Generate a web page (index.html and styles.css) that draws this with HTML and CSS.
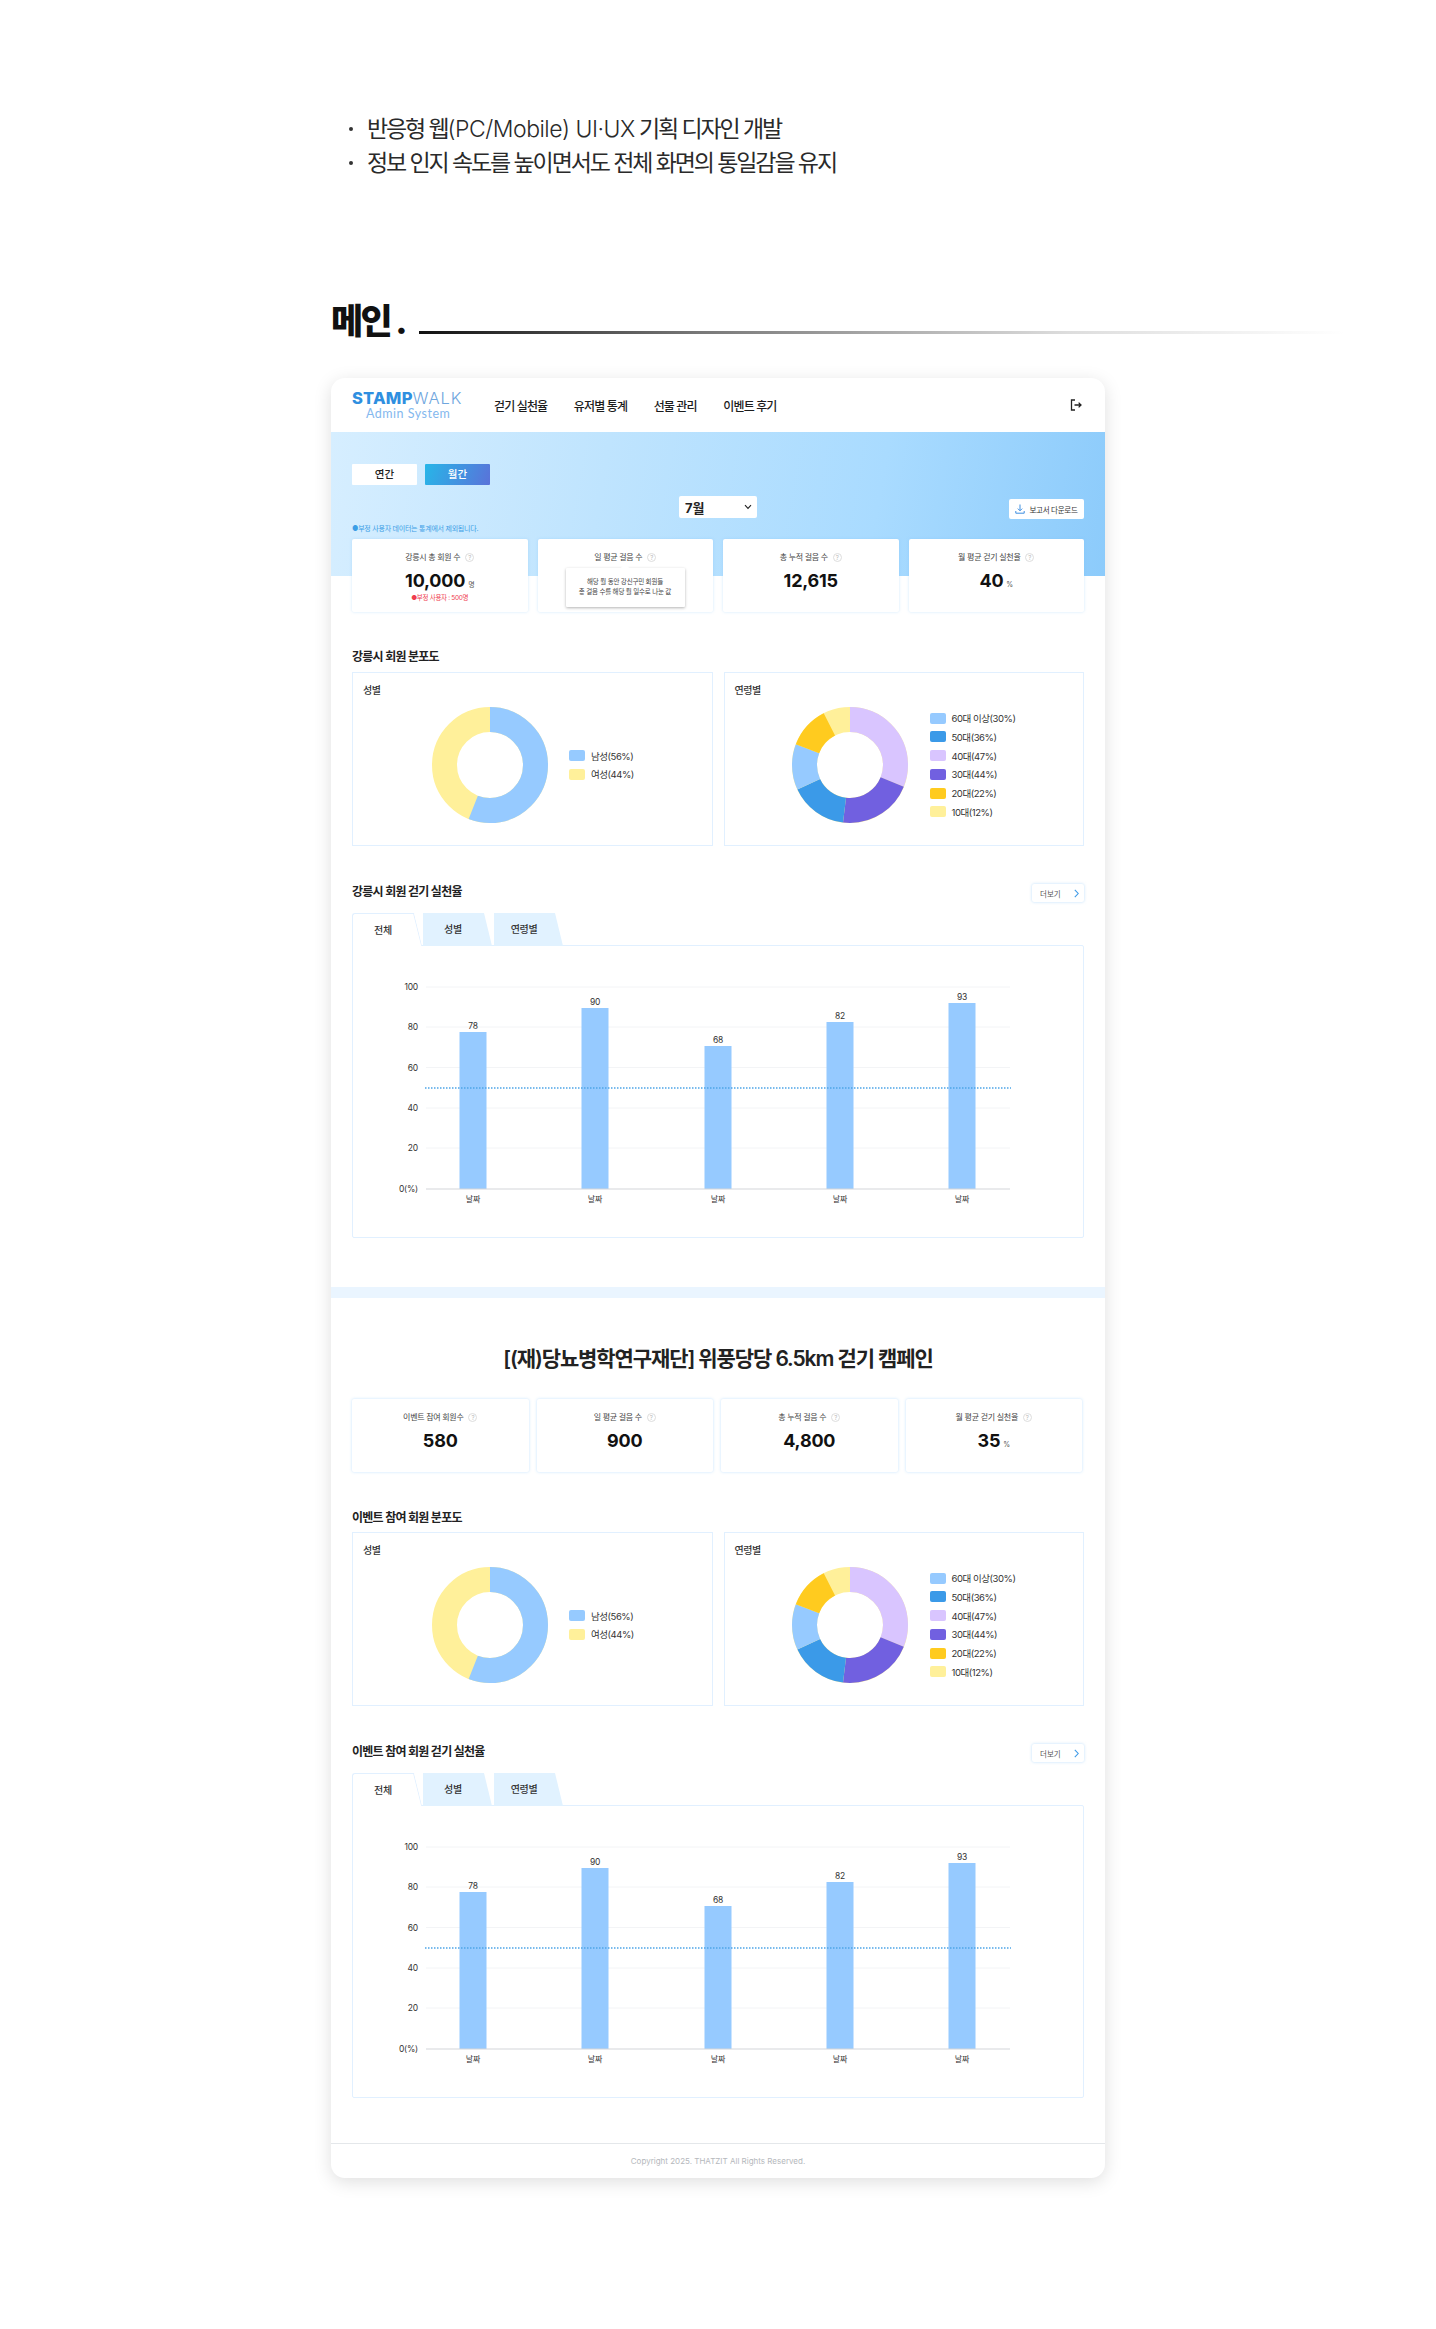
FILE: index.html
```html
<!DOCTYPE html>
<html lang="ko">
<head>
<meta charset="utf-8">
<title>STAMPWALK Admin System</title>
<link rel="stylesheet" href="styles.css">
</head>
<body>
<main class="page">
  <ul class="intro">
    <li><span>반응형 웹<em>(PC/Mobile) UI·UX</em> 기획 디자인 개발</span></li>
    <li><span>정보 인지 속도를 높이면서도 전체 화면의 통일감을 유지</span></li>
  </ul>
  <div class="title-row">
    <h1 class="page-title">메인 .</h1>
    <div class="title-line"></div>
  </div>

  <section class="card">
    <header class="topbar">
      <div class="logo">
        <div class="logo-main"><b>STAMP</b>WALK</div>
        <div class="logo-sub">Admin System</div>
      </div>
      <nav class="nav">
        <span>걷기 실천율</span><span>유저별 통계</span><span>선물 관리</span><span>이벤트 후기</span>
      </nav>
      <svg class="logout" width="12" height="12" viewBox="0 0 12 12"><path d="M5 1H1.5v10H5M4.5 6h6.5M8.6 3.6 11 6 8.6 8.4" fill="none" stroke="#222" stroke-width="1.3"/></svg>
    </header>

    <div class="hero">
      <div class="period">
        <span class="period-btn">연간</span>
        <span class="period-btn is-on">월간</span>
      </div>
      <div class="tools">
        <div class="month">7월<svg width="8" height="6" viewBox="0 0 8 6"><path d="M1 1.2 4 4.4l3-3.2" fill="none" stroke="#222" stroke-width="1.1"/></svg></div>
        <div class="report"><svg width="10" height="10" viewBox="0 0 10 10"><path d="M5 .5v6M2.8 4.6 5 6.8l2.2-2.2M.8 7v2.2h8.4V7" fill="none" stroke="#3f8fe0" stroke-width="1"/></svg>보고서 다운로드</div>
      </div>
      <p class="note">●부정 사용자 데이터는 통계에서 제외됩니다.</p>
      <div class="stats">
        <div class="stat">
          <div class="stat-label">강릉시 총 회원 수 <i class="info">?</i></div>
          <div class="stat-value">10,000<small>명</small></div>
          <div class="stat-sub">●부정 사용자 : 500명</div>
        </div>
        <div class="stat">
          <div class="stat-label">일 평균 걸음 수 <i class="info">?</i></div>
          <div class="tooltip">해당 월 동안 강신구민 회원들<br>총 걸음 수를 해당 월 일수로 나눈 값</div>
        </div>
        <div class="stat">
          <div class="stat-label">총 누적 걸음 수 <i class="info">?</i></div>
          <div class="stat-value">12,615</div>
        </div>
        <div class="stat">
          <div class="stat-label">월 평균 걷기 실천율 <i class="info">?</i></div>
          <div class="stat-value">40<small>%</small></div>
        </div>
      </div>
    </div>

    <div class="body">
      <h2 class="heading heading-hero">강릉시 회원 분포도</h2>
      <div class="dist">
        <div class="panel">
          <h3 class="panel-title">성별</h3>
          <div class="donut-row donut-row-gender">
            <svg class="donut" width="116" height="116" viewBox="0 0 116 116">
              <circle class="ring" cx="58" cy="58" r="45.5" pathLength="100" stroke="#fff09a"/>
              <circle class="ring" cx="58" cy="58" r="45.5" pathLength="100" stroke="#96caff" stroke-dasharray="56 44" transform="rotate(-90 58 58)"/>
            </svg>
            <ul class="legend">
              <li><i class="sw c1"></i>남성(56%)</li>
              <li><i class="sw c6"></i>여성(44%)</li>
            </ul>
          </div>
        </div>
        <div class="panel">
          <h3 class="panel-title">연령별</h3>
          <div class="donut-row donut-row-age">
            <svg class="donut" width="116" height="116" viewBox="0 0 116 116">
              <g transform="rotate(-90 58 58)">
                <circle class="ring" cx="58" cy="58" r="45.5" pathLength="360" stroke="#fff09a"/>
                <circle class="ring" cx="58" cy="58" r="45.5" pathLength="360" stroke="#d9c5ff" stroke-dasharray="112 248"/>
                <circle class="ring" cx="58" cy="58" r="45.5" pathLength="360" stroke="#7160e0" stroke-dasharray="75 285" stroke-dashoffset="-112"/>
                <circle class="ring" cx="58" cy="58" r="45.5" pathLength="360" stroke="#3b9ae8" stroke-dasharray="58 302" stroke-dashoffset="-187"/>
                <circle class="ring" cx="58" cy="58" r="45.5" pathLength="360" stroke="#96caff" stroke-dasharray="46 314" stroke-dashoffset="-245"/>
                <circle class="ring" cx="58" cy="58" r="45.5" pathLength="360" stroke="#ffcb1f" stroke-dasharray="42 318" stroke-dashoffset="-291"/>
              </g>
            </svg>
            <ul class="legend">
              <li><i class="sw c1"></i>60대 이상(30%)</li>
              <li><i class="sw c2"></i>50대(36%)</li>
              <li><i class="sw c3"></i>40대(47%)</li>
              <li><i class="sw c4"></i>30대(44%)</li>
              <li><i class="sw c5"></i>20대(22%)</li>
              <li><i class="sw c6"></i>10대(12%)</li>
            </ul>
          </div>
        </div>
      </div>

      <div class="heading-row">
        <h2 class="heading">강릉시 회원 걷기 실천율</h2>
        <div class="more">더보기<svg width="5" height="9" viewBox="0 0 5 9"><path d="M.8.8 4.2 4.5.8 8.2" fill="none" stroke="#3f9be8" stroke-width="1.1"/></svg></div>
      </div>
      <div class="tabs">
        <span class="tab is-on">전체</span><span class="tab">성별</span><span class="tab">연령별</span>
      </div>
      <div class="chart-panel">
        <svg class="chart" width="730" height="291" viewBox="0 0 730 291">
          <g class="grid"><line x1="73" x2="657" y1="41" y2="41"/><line x1="73" x2="657" y1="81" y2="81"/><line x1="73" x2="657" y1="121.5" y2="121.5"/><line x1="73" x2="657" y1="162" y2="162"/><line x1="73" x2="657" y1="202" y2="202"/></g>
          <g class="bars"><rect x="106.5" y="86" width="27" height="157"/><rect x="228.5" y="62" width="27" height="181"/><rect x="351.5" y="100" width="27" height="143"/><rect x="473.5" y="76" width="27" height="167"/><rect x="595.5" y="57" width="27" height="186"/></g>
          <line class="axis" x1="73" x2="657" y1="243" y2="243"/>
          <line class="goal" x1="72" x2="658" y1="142" y2="142"/>
          <g class="ticks"><text x="65" y="44">100</text><text x="65" y="84">80</text><text x="65" y="124.500">60</text><text x="65" y="165">40</text><text x="65" y="205">20</text><text x="65" y="246">0(%)</text></g>
          <g class="vals"><text x="120" y="83">78</text><text x="242" y="59">90</text><text x="365" y="97">68</text><text x="487" y="73">82</text><text x="609" y="54">93</text></g>
          <g class="dates"><text x="120" y="256">날짜</text><text x="242" y="256">날짜</text><text x="365" y="256">날짜</text><text x="487" y="256">날짜</text><text x="609" y="256">날짜</text></g>
        </svg>
      </div>
    </div>

    <div class="band"></div>

    <div class="body body-event">
      <h2 class="event-title">[(재)당뇨병학연구재단] 위풍당당 6.5km 걷기 캠페인</h2>
      <div class="stats stats-event">
        <div class="stat">
          <div class="stat-label">이벤트 참여 회원수 <i class="info">?</i></div>
          <div class="stat-value">580</div>
        </div>
        <div class="stat">
          <div class="stat-label">일 평균 걸음 수 <i class="info">?</i></div>
          <div class="stat-value">900</div>
        </div>
        <div class="stat">
          <div class="stat-label">총 누적 걸음 수 <i class="info">?</i></div>
          <div class="stat-value">4,800</div>
        </div>
        <div class="stat">
          <div class="stat-label">월 평균 걷기 실천율 <i class="info">?</i></div>
          <div class="stat-value">35<small>%</small></div>
        </div>
      </div>

      <h2 class="heading heading-event">이벤트 참여 회원 분포도</h2>
      <div class="dist">
        <div class="panel">
          <h3 class="panel-title">성별</h3>
          <div class="donut-row donut-row-gender">
            <svg class="donut" width="116" height="116" viewBox="0 0 116 116">
              <circle class="ring" cx="58" cy="58" r="45.5" pathLength="100" stroke="#fff09a"/>
              <circle class="ring" cx="58" cy="58" r="45.5" pathLength="100" stroke="#96caff" stroke-dasharray="56 44" transform="rotate(-90 58 58)"/>
            </svg>
            <ul class="legend">
              <li><i class="sw c1"></i>남성(56%)</li>
              <li><i class="sw c6"></i>여성(44%)</li>
            </ul>
          </div>
        </div>
        <div class="panel">
          <h3 class="panel-title">연령별</h3>
          <div class="donut-row donut-row-age">
            <svg class="donut" width="116" height="116" viewBox="0 0 116 116">
              <g transform="rotate(-90 58 58)">
                <circle class="ring" cx="58" cy="58" r="45.5" pathLength="360" stroke="#fff09a"/>
                <circle class="ring" cx="58" cy="58" r="45.5" pathLength="360" stroke="#d9c5ff" stroke-dasharray="112 248"/>
                <circle class="ring" cx="58" cy="58" r="45.5" pathLength="360" stroke="#7160e0" stroke-dasharray="75 285" stroke-dashoffset="-112"/>
                <circle class="ring" cx="58" cy="58" r="45.5" pathLength="360" stroke="#3b9ae8" stroke-dasharray="58 302" stroke-dashoffset="-187"/>
                <circle class="ring" cx="58" cy="58" r="45.5" pathLength="360" stroke="#96caff" stroke-dasharray="46 314" stroke-dashoffset="-245"/>
                <circle class="ring" cx="58" cy="58" r="45.5" pathLength="360" stroke="#ffcb1f" stroke-dasharray="42 318" stroke-dashoffset="-291"/>
              </g>
            </svg>
            <ul class="legend">
              <li><i class="sw c1"></i>60대 이상(30%)</li>
              <li><i class="sw c2"></i>50대(36%)</li>
              <li><i class="sw c3"></i>40대(47%)</li>
              <li><i class="sw c4"></i>30대(44%)</li>
              <li><i class="sw c5"></i>20대(22%)</li>
              <li><i class="sw c6"></i>10대(12%)</li>
            </ul>
          </div>
        </div>
      </div>

      <div class="heading-row">
        <h2 class="heading">이벤트 참여 회원 걷기 실천율</h2>
        <div class="more">더보기<svg width="5" height="9" viewBox="0 0 5 9"><path d="M.8.8 4.2 4.5.8 8.2" fill="none" stroke="#3f9be8" stroke-width="1.1"/></svg></div>
      </div>
      <div class="tabs">
        <span class="tab is-on">전체</span><span class="tab">성별</span><span class="tab">연령별</span>
      </div>
      <div class="chart-panel">
        <svg class="chart" width="730" height="291" viewBox="0 0 730 291">
          <g class="grid"><line x1="73" x2="657" y1="41" y2="41"/><line x1="73" x2="657" y1="81" y2="81"/><line x1="73" x2="657" y1="121.5" y2="121.5"/><line x1="73" x2="657" y1="162" y2="162"/><line x1="73" x2="657" y1="202" y2="202"/></g>
          <g class="bars"><rect x="106.5" y="86" width="27" height="157"/><rect x="228.5" y="62" width="27" height="181"/><rect x="351.5" y="100" width="27" height="143"/><rect x="473.5" y="76" width="27" height="167"/><rect x="595.5" y="57" width="27" height="186"/></g>
          <line class="axis" x1="73" x2="657" y1="243" y2="243"/>
          <line class="goal" x1="72" x2="658" y1="142" y2="142"/>
          <g class="ticks"><text x="65" y="44">100</text><text x="65" y="84">80</text><text x="65" y="124.500">60</text><text x="65" y="165">40</text><text x="65" y="205">20</text><text x="65" y="246">0(%)</text></g>
          <g class="vals"><text x="120" y="83">78</text><text x="242" y="59">90</text><text x="365" y="97">68</text><text x="487" y="73">82</text><text x="609" y="54">93</text></g>
          <g class="dates"><text x="120" y="256">날짜</text><text x="242" y="256">날짜</text><text x="365" y="256">날짜</text><text x="487" y="256">날짜</text><text x="609" y="256">날짜</text></g>
        </svg>
      </div>
    </div>

    <footer class="footer">Copyright 2025. THATZIT All Rights Reserved.</footer>
  </section>
</main>
</body>
</html>
```
FILE: styles.css
```css
* { box-sizing: border-box; }
html, body { margin: 0; padding: 0; background: #fff; }
body {
  font-family: Inter, "Noto Sans CJK KR", sans-serif;
  color: #222;
}
ul { list-style: none; margin: 0; padding: 0; }
h1, h2, h3, p { margin: 0; }

.page { height: 2329px; padding-top: 112px; }

.intro { margin-left: 349px; }
.intro li {
  font-size: 23px;
  line-height: 34px;
  letter-spacing: -2.1px;
  color: #2a2a2a;
  display: flex;
  align-items: center;
  gap: 14px;
}
.intro li::before {
  content: "";
  width: 4px;
  height: 4px;
  border-radius: 50%;
  background: #333;
  flex: none;
}
.intro em { font-style: normal; font-weight: 300; letter-spacing: -.5px; }

.title-row {
  display: flex;
  align-items: flex-end;
  margin: 116px 0 0 331px;
  height: 44px;
}
.page-title {
  font-size: 35px;
  line-height: 44px;
  font-weight: 800;
  letter-spacing: -2.6px;
  margin-bottom: -3px;
  color: #111;
}
.title-line {
  width: 926px;
  height: 3px;
  margin: 0 0 6px 14px;
  background: linear-gradient(90deg, #111 0%, #777 30%, #ddd 70%, #fff 100%);
}

.card {
  width: 774px;
  height: 1800px;
  margin: 38px 0 0 331px;
  background: #fff;
  border-radius: 14px;
  box-shadow: 0 4px 18px rgba(0, 0, 0, .13);
  overflow: hidden;
}

.topbar {
  height: 54px;
  display: flex;
  align-items: center;
  padding: 0 21px;
}
.logo { width: 142px; color: #4b9fe8; }
.logo-main {
  font-size: 16.5px;
  line-height: 17px;
  font-weight: 300;
  letter-spacing: .9px;
  color: #6fa6de;
}
.logo-main b { font-weight: 800; letter-spacing: .2px; color: #2f8fe0; }
.logo-sub {
  font-family: Lato, sans-serif;
  font-size: 12.5px;
  line-height: 13px;
  margin-left: 14px;
  color: #84b8ee;
  letter-spacing: .5px;
}
.nav {
  display: flex;
  gap: 26.5px;
  font-size: 12px;
  font-weight: 500;
  letter-spacing: -.85px;
  color: #1d1d1d;
}
.logout { margin-left: auto; margin-right: 2px; }

.hero {
  height: 144px;
  padding: 32px 21px 0;
  background: linear-gradient(100deg, #d6eeff 0%, #bfe4fe 35%, #a9dbff 70%, #8ccbfb 100%);
}
.period { display: flex; gap: 8px; }
.period-btn {
  width: 65px;
  height: 21px;
  background: #fff;
  font-size: 10.5px;
  font-weight: 500;
  line-height: 21px;
  text-align: center;
  border-radius: 1px;
}
.period-btn.is-on {
  color: #fff;
  background: linear-gradient(110deg, #27b6e8, #5a72d9);
}
.tools {
  display: grid;
  grid-template-columns: 1fr 78px 1fr;
  align-items: start;
  margin-top: 11px;
  height: 23px;
}
.month {
  grid-column: 2;
  height: 22px;
  background: #fff;
  border-radius: 2px;
  display: flex;
  align-items: center;
  justify-content: space-between;
  padding: 0 5px 0 6px;
  font-size: 13px;
  font-weight: 700;
}
.report {
  grid-column: 3;
  justify-self: end;
  width: 75px;
  height: 20px;
  margin-top: 3px;
  background: #fff;
  border-radius: 2px;
  display: flex;
  align-items: center;
  justify-content: center;
  gap: 4px;
  font-size: 7.5px;
  letter-spacing: -.3px;
  color: #333;
}
.note {
  font-size: 7px;
  line-height: 10px;
  letter-spacing: -.25px;
  color: #3c9ee6;
  margin-top: 5px;
}
.stats {
  display: grid;
  grid-template-columns: repeat(4, 1fr);
  gap: 10px;
  margin-top: 5px;
}
.stat {
  position: relative;
  height: 73px;
  background: #fff;
  border-radius: 2px;
  box-shadow: 0 0 3px rgba(120, 190, 250, .35);
  text-align: center;
  padding-top: 13px;
}
.stat-label {
  font-size: 8px;
  line-height: 10px;
  letter-spacing: -.3px;
  color: #444;
  display: flex;
  justify-content: center;
  align-items: center;
  gap: 3px;
  white-space: pre;
}
.info {
  width: 9px;
  height: 9px;
  border: 1px solid #ddd;
  border-radius: 50%;
  font-size: 6px;
  line-height: 7px;
  font-style: normal;
  color: #bbb;
  text-align: center;
  letter-spacing: 0;
}
.stat-value {
  font-size: 18px;
  font-weight: 700;
  line-height: 22px;
  margin-top: 8px;
  letter-spacing: -.2px;
  color: #111;
}
.stat-value small {
  font-size: 7px;
  font-weight: 400;
  margin-left: 3px;
  color: #555;
}
.stat-sub {
  font-size: 6.5px;
  line-height: 8px;
  letter-spacing: -.3px;
  color: #ef3d4e;
  margin-top: -2px;
}
.tooltip {
  position: absolute;
  left: 28px;
  top: 29px;
  width: 119px;
  height: 39px;
  padding-top: 9px;
  background: #fff;
  font-size: 6.5px;
  line-height: 10px;
  letter-spacing: -.2px;
  color: #444;
  box-shadow: 0 1px 3px rgba(0, 0, 0, .3);
  border-radius: 1px;
}
.tooltip::before {
  content: "";
  position: absolute;
  left: 56px;
  top: -3px;
  width: 6px;
  height: 6px;
  background: #fff;
  transform: rotate(45deg);
}

.body { padding: 0 21px; }
.heading {
  font-size: 12px;
  line-height: 14px;
  font-weight: 600;
  letter-spacing: -.75px;
  color: #222;
}
.heading-hero { margin-top: 74px; margin-bottom: 8px; }
.heading-event { margin-top: 39px; margin-bottom: 7px; }
.heading-row .heading { margin-top: 1px; }
.dist {
  display: grid;
  grid-template-columns: 1fr 1fr;
  gap: 11px;
}
.panel {
  height: 174px;
  border: 1px solid #e1f0ff;
  padding: 11px 10px 0;
}
.panel-title {
  font-size: 10px;
  line-height: 12px;
  font-weight: 500;
  letter-spacing: -.4px;
  color: #333;
}
.donut-row {
  display: flex;
  align-items: center;
  gap: 21px;
  margin-top: 11px;
}
.donut-row-gender { padding-left: 69px; }
.donut-row-age { padding-left: 57px; gap: 22px; }
.donut { display: block; flex: none; }
.ring { fill: none; stroke-width: 25; }
.legend li {
  display: flex;
  align-items: center;
  gap: 6px;
  height: 18.8px;
  font-size: 9.5px;
  letter-spacing: -.45px;
  color: #333;
}
.sw {
  width: 16px;
  height: 11px;
  border-radius: 2px;
  flex: none;
}
.c1 { background: #96caff; }
.c2 { background: #3b9ae8; }
.c3 { background: #d9c5ff; }
.c4 { background: #7160e0; }
.c5 { background: #ffcb1f; }
.c6 { background: #fff09a; }

.heading-row {
  display: flex;
  justify-content: space-between;
  align-items: flex-start;
  margin-top: 38px;
  height: 18px;
}
.more {
  width: 52px;
  height: 18px;
  border-radius: 2px;
  box-shadow: 0 0 3px rgba(120, 190, 250, .5);
  display: flex;
  align-items: center;
  justify-content: space-between;
  padding: 0 5px 0 8px;
  font-size: 7.5px;
  color: #555;
}
.tabs {
  display: flex;
  gap: 2px;
  height: 33px;
  margin-top: 11px;
  margin-bottom: -1px;
  position: relative;
  z-index: 1;
}
.tab {
  position: relative;
  width: 69px;
  height: 33px;
  padding-right: 9px;
  font-size: 10px;
  line-height: 32px;
  font-weight: 500;
  letter-spacing: -.3px;
  text-align: center;
  color: #333;
  background: #e1f2ff;
  clip-path: polygon(0 0, 61px 0, 69px 100%, 0 100%);
}
.tab.is-on {
  background: #fff;
  border-top: 1px solid #e1f0ff;
  border-left: 1px solid #e1f0ff;
  border-top-left-radius: 3px;
  clip-path: polygon(0 0, 62px 0, 70px 100%, 0 100%);
  width: 70px;
  margin-right: -1px;
}
.tab.is-on::after {
  content: "";
  position: absolute;
  left: 60px;
  top: -1px;
  width: 1px;
  height: 33px;
  background: #e1f0ff;
  transform-origin: top left;
  transform: skewX(14deg);
}
.chart-panel {
  height: 293px;
  border: 1px solid #e1f0ff;
  border-radius: 0 2px 2px 2px;
}
.chart { display: block; font-size: 8.5px; }
.chart text { fill: #333; letter-spacing: -.2px; }
.grid line { stroke: #f3f4f6; stroke-width: 1; }
.bars rect { fill: #96caff; }
.axis { stroke: #d4d6d9; stroke-width: 1.2; }
.goal { stroke: #4ea5e8; stroke-width: 1.5; stroke-dasharray: 1.5 1.5; }
.ticks text { text-anchor: end; }
.vals text, .dates text { text-anchor: middle; }
.dates text { font-size: 8px; }

.band { height: 11px; margin-top: 49px; background: #eaf5ff; }
.event-title {
  margin-top: 46px;
  font-size: 21px;
  line-height: 30px;
  font-weight: 600;
  letter-spacing: -1.1px;
  text-align: center;
  color: #222;
}
.stats-event {
  gap: 8px;
  width: 730px;
  margin-top: 25px;
}
.stats-event .stat { box-shadow: 0 0 3px rgba(120, 190, 250, .45); }
.footer {
  height: 35px;
  margin-top: 45px;
  border-top: 1px solid #e4e7ea;
  font-size: 8px;
  line-height: 34px;
  text-align: center;
  color: #b5b8bc;
}
```
